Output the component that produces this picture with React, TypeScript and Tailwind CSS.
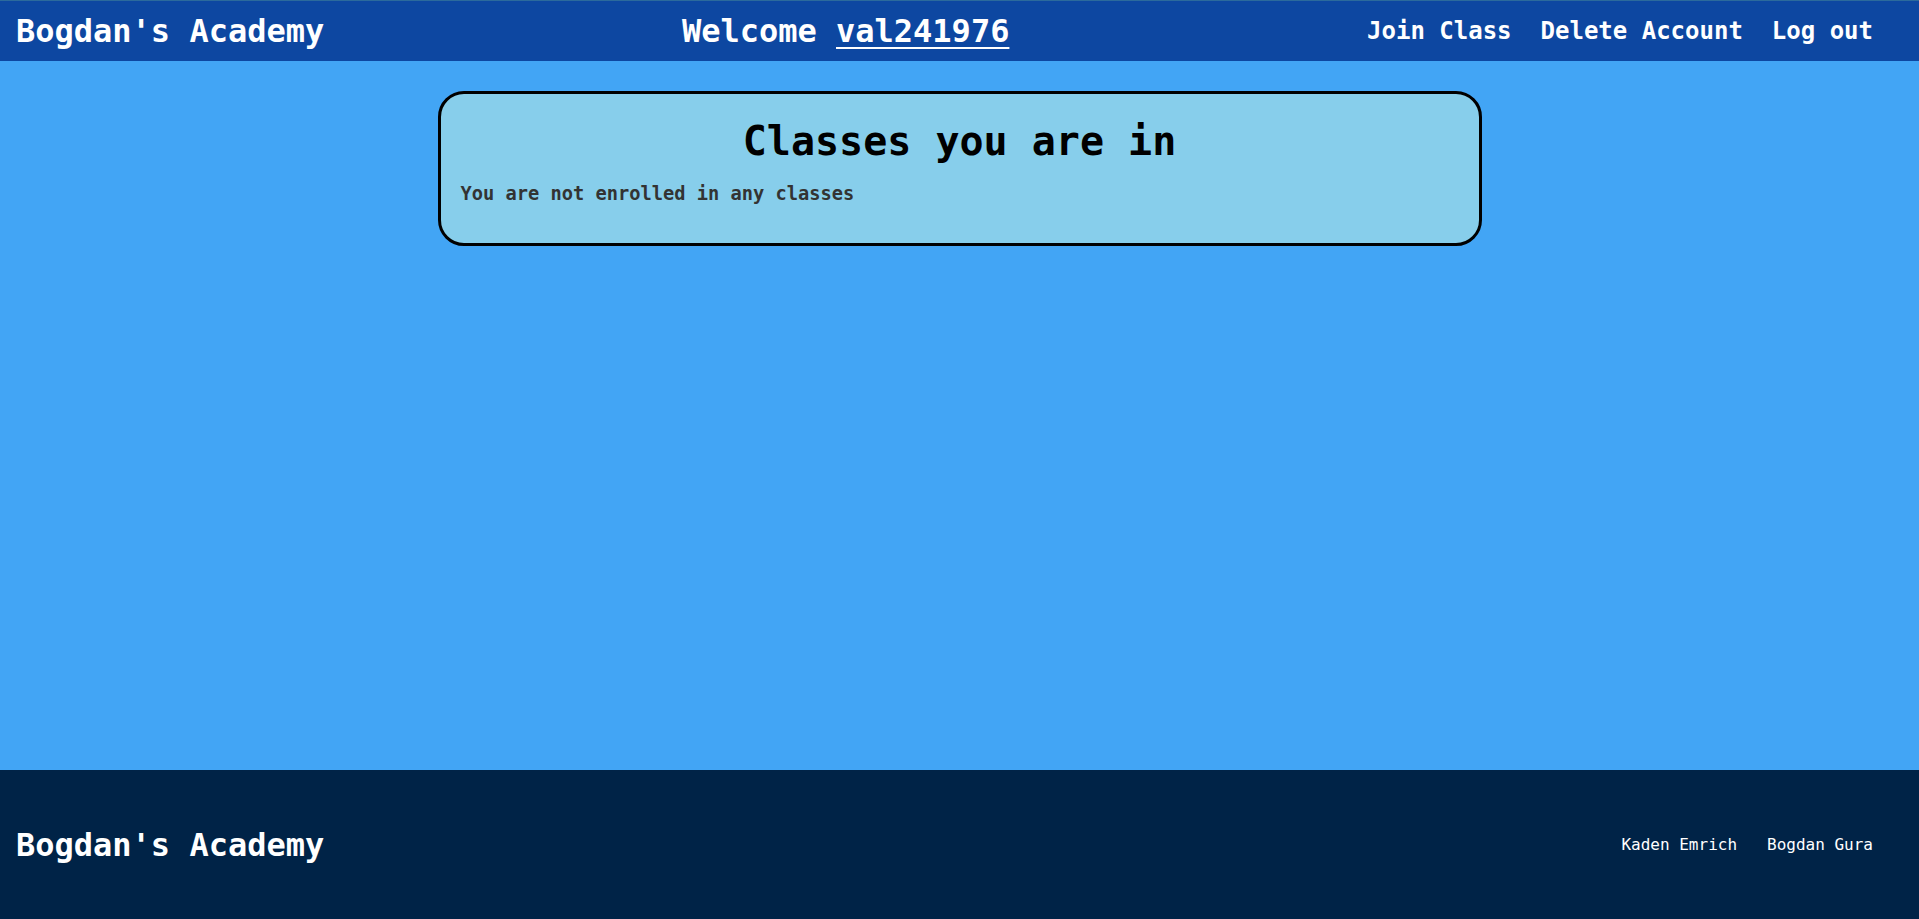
const navLinks = ['Join Class', 'Delete Account', 'Log out']
const authors = ['Kaden Emrich', 'Bogdan Gura']

const mono = "font-['DejaVu_Sans_Mono','Liberation_Mono',monospace]"

export default function App() {
  return (
    <div className={`min-h-screen flex flex-col bg-[#42a5f5] ${mono}`}>
      {/* Header */}
      <header className="h-[61px] flex items-center justify-between bg-[#0d47a1] border-t border-[#2b6a9c] pl-4 pr-[46px] text-white font-bold">
        <div className="text-[32px] leading-none">Bogdan's Academy</div>
        <div className="text-[32px] leading-none">
          Welcome <a className="underline decoration-2 underline-offset-[5px]">val241976</a>
        </div>
        <nav className="flex gap-[29px] text-[24px] leading-none">
          {navLinks.map((link) => (
            <a key={link}>{link}</a>
          ))}
        </nav>
      </header>

      {/* Main */}
      <main className="flex-1 pt-[30px]">
        <div className="w-[1044px] mx-auto bg-[#87ceeb] border-[3px] border-black rounded-[26px] px-5 pt-[24px] pb-[39px]">
          <h1 className="text-[40px] font-bold text-black text-center leading-[1.164]">Classes you are in</h1>
          <p className="mt-[18px] text-[18.7px] font-bold text-[#333333] leading-[1.164]">
            You are not enrolled in any classes
          </p>
        </div>
      </main>

      {/* Footer */}
      <footer className="h-[149px] flex items-center justify-between bg-[#002347] pl-4 pr-[46px] text-white">
        <div className="text-[32px] font-bold leading-none">Bogdan's Academy</div>
        <div className="flex gap-[30px] text-[16px]">
          {authors.map((name) => (
            <span key={name}>{name}</span>
          ))}
        </div>
      </footer>
    </div>
  )
}
